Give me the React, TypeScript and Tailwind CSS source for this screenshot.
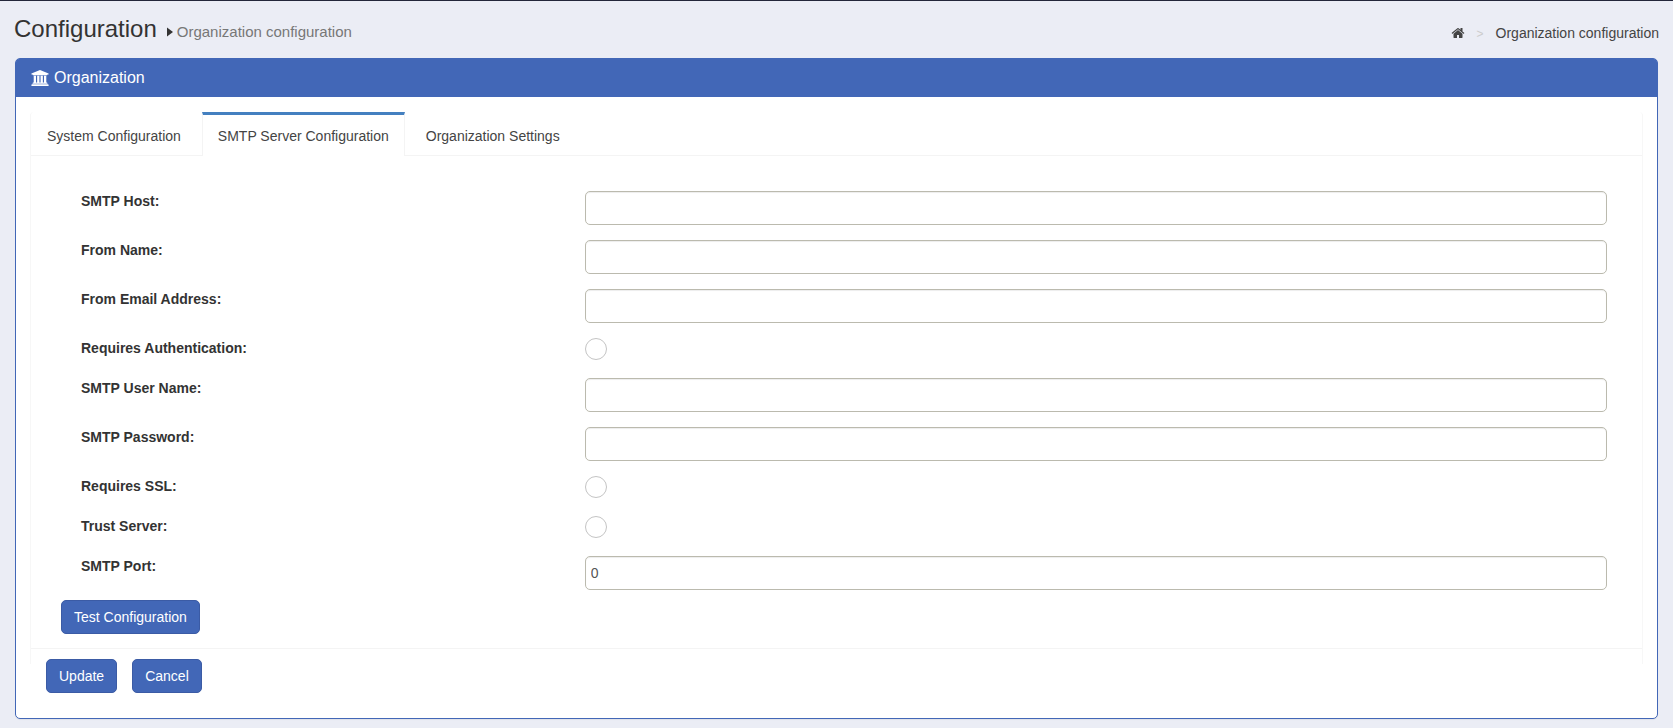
/**
 * Organization configuration page
 * Shows the SMTP server settings tab with its form
 */

import React, { useState } from 'react';

interface Field {
  id: string;
  label: string;
  type: 'text' | 'password' | 'checkbox';
  value?: string;
}

const TABS = ['System Configuration', 'SMTP Server Configuration', 'Organization Settings'];

const FIELDS: Field[] = [
  { id: 'smtpHost', label: 'SMTP Host:', type: 'text' },
  { id: 'fromName', label: 'From Name:', type: 'text' },
  { id: 'fromEmail', label: 'From Email Address:', type: 'text' },
  { id: 'requiresAuth', label: 'Requires Authentication:', type: 'checkbox' },
  { id: 'smtpUser', label: 'SMTP User Name:', type: 'text' },
  { id: 'smtpPassword', label: 'SMTP Password:', type: 'password' },
  { id: 'requiresSsl', label: 'Requires SSL:', type: 'checkbox' },
  { id: 'trustServer', label: 'Trust Server:', type: 'checkbox' },
  { id: 'smtpPort', label: 'SMTP Port:', type: 'text', value: '0' },
];

function HomeIcon() {
  return (
    <svg viewBox="0 0 1792 1792" className="size-3.5" fill="currentColor" aria-hidden="true">
      <path d="M1472 992v480q0 26-19 45t-45 19h-384v-384h-256v384h-384q-26 0-45-19t-19-45v-480q0-1 .5-3t.5-3l575-474 575 474q1 2 1 6zm223-69l-62 74q-8 9-21 11h-3q-13 0-21-7l-692-577-692 577q-12 8-24 7-13-2-21-11l-62-74q-8-10-7-23.5t11-21.5l719-599q32-26 76-26t76 26l244 204v-195q0-14 9-23t23-9h192q14 0 23 9t9 23v408l219 182q10 8 11 21.5t-7 23.5z" />
    </svg>
  );
}

function UniversityIcon() {
  return (
    <svg viewBox="0 0 1920 1792" className="h-4 w-[18px]" fill="currentColor" aria-hidden="true">
      <path d="M960 0l960 384v128h-128q0 26-20.5 45t-48.5 19h-1526q-28 0-48.5-19t-20.5-45h-128v-128zm-704 640h256v768h128v-768h256v768h128v-768h256v768h128v-768h256v768h59q28 0 48.5 19t20.5 45v64h-1664v-64q0-26 20.5-45t48.5-19h59v-768zm1595 960q28 0 48.5 19t20.5 45v128h-1920v-128q0-26 20.5-45t48.5-19h1782z" />
    </svg>
  );
}

function Button({ children }: { children: React.ReactNode }) {
  return (
    <button
      type="button"
      className="h-[34px] rounded-[5px] border border-[#3b5ba5] bg-[#4267b7] px-3 text-white hover:bg-[#3b5ca4]"
    >
      {children}
    </button>
  );
}

function FormRow({ field }: { field: Field }) {
  return (
    <div className="grid grid-cols-3 items-start">
      <label htmlFor={field.id} className="pl-[15px] font-bold">
        {field.label}
      </label>
      <div className="col-span-2 flex pr-[15px]">
        {field.type === 'checkbox' ? (
          <input
            id={field.id}
            type="checkbox"
            className="mb-[18px] size-[22px] appearance-none rounded-full border border-[#c4c4c4] bg-white checked:bg-[#4267b7]"
          />
        ) : (
          <input
            id={field.id}
            type={field.type}
            defaultValue={field.value}
            className="mb-[15px] h-[34px] w-full rounded-[5px] border border-[#bbbaae] bg-white px-[5px] text-[#555] shadow-[inset_0_1px_1px_rgba(0,0,0,0.075)]"
          />
        )}
      </div>
    </div>
  );
}

export default function App() {
  const [activeTab, setActiveTab] = useState(TABS[1]);

  return (
    <div className="min-h-screen border-t border-[#23263a] bg-[#ebedf5] px-[15px] pb-2 font-['Liberation_Sans',Arial,sans-serif] text-sm text-[#333]">
      {/* Page title and breadcrumb */}
      <header className="-mx-px flex h-[57px] items-center justify-between pb-0.5">
        <h1 className="flex items-baseline text-2xl">
          Configuration
          <small className="ml-2.5 flex items-center gap-1 text-[15px] text-[#777]">
            <svg viewBox="0 0 6 10" className="h-2.5 w-1.5" fill="#333" aria-hidden="true">
              <path d="M0 0.5v9L6 5z" />
            </svg>
            Organization configuration
          </small>
        </h1>
        <nav aria-label="Breadcrumb" className="flex items-center pt-2 text-[#444]">
          <a href="#" aria-label="Home">
            <HomeIcon />
          </a>
          <span className="mx-3 pt-0.5 text-xs text-[#ccc]">&gt;</span>
          <a href="#">Organization configuration</a>
        </nav>
      </header>

      <section className="rounded-[5px] border border-[#4267b7] bg-white shadow-[0_1px_1px_rgba(0,0,0,0.05)]">
        <h2 className="flex h-[38px] items-center gap-[5px] rounded-t-[3px] bg-[#4267b7] px-[15px] text-base text-white">
          <UniversityIcon />
          Organization
        </h2>

        <div className="px-[14px] pt-[15px] pb-[25px]">
          <div className="rounded-t border-x border-[#f7f7f7]">
            {/* Tabs */}
            <div role="tablist" className="flex gap-[5px] border-b border-[#f4f4f4]">
              {TABS.map(tab => (
                <button
                  key={tab}
                  type="button"
                  role="tab"
                  aria-selected={tab === activeTab}
                  onClick={() => setActiveTab(tab)}
                  className={
                    tab === activeTab
                      ? '-mb-px h-[44px] border-x border-t-3 border-x-[#f4f4f4] border-t-[#4480c0] bg-white px-[15px] text-[#444]'
                      : 'h-[44px] border-t-3 border-transparent px-4 text-[#444] -mb-px'
                  }
                >
                  {tab}
                </button>
              ))}
            </div>

            {/* SMTP form */}
            <form className="pt-[35px] pr-5 pb-3.5 pl-[35px]">
              {FIELDS.map(field => (
                <FormRow key={field.id} field={field} />
              ))}
              <div className="-ml-[5px] -mt-[5px]">
                <Button>Test Configuration</Button>
              </div>
            </form>

            <div className="h-4 border-t border-[#f4f4f4]" />
          </div>

          {/* Form actions */}
          <div className="-mt-[5px] flex gap-[15px] px-4">
            <Button>Update</Button>
            <Button>Cancel</Button>
          </div>
        </div>
      </section>
    </div>
  );
}
